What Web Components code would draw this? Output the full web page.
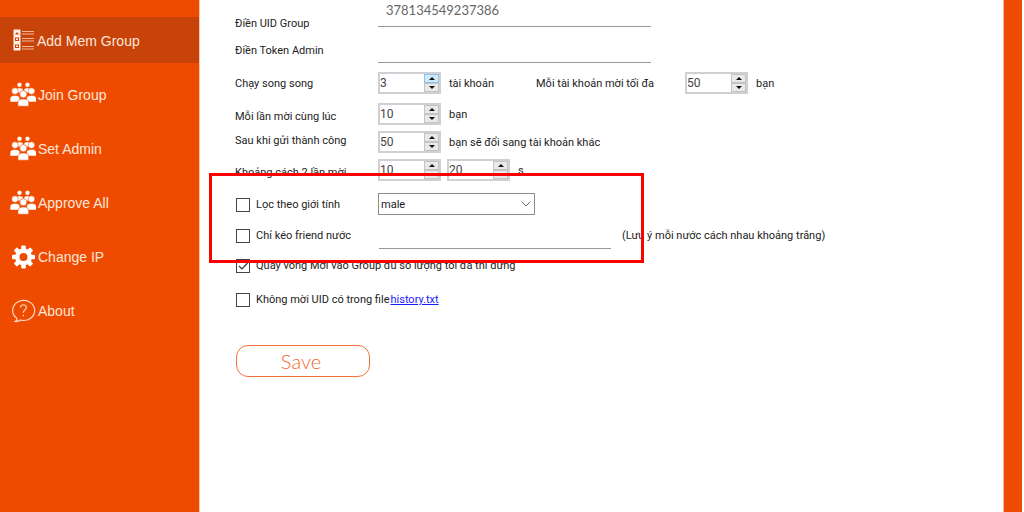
<!DOCTYPE html>
<html lang="vi">
<head>
<meta charset="utf-8">
<title>Add Mem Group</title>
<style>
  html, body { margin: 0; min-height: 100%; background: #fff; }
  body { font-family: Roboto, "Liberation Sans", sans-serif; font-size: 11px; line-height: 16px; color: #222; }
</style>
</head>
<body>
<app-shell>
  <side-nav slot="nav">
    <nav-item icon="list" active>Add Mem Group</nav-item>
    <nav-item icon="people">Join Group</nav-item>
    <nav-item icon="people">Set Admin</nav-item>
    <nav-item icon="people">Approve All</nav-item>
    <nav-item icon="gear">Change IP</nav-item>
    <nav-item icon="help">About</nav-item>
  </side-nav>
  <settings-form></settings-form>
</app-shell>

<template id="app-shell">
  <style>
    :host { display: flex; min-height: 100vh; padding-right: 2px; box-sizing: border-box; }
    aside { flex: 0 0 200px; background: #ee4b00; border-right: 1px solid #fbc4a8; box-sizing: border-box; }
    main { flex: 1; min-width: 0; }
    .edge { flex: 0 0 19px; background: #ee4b00; border-left: 1px solid #fbb391; box-sizing: border-box; }
  </style>
  <aside><slot name="nav"></slot></aside>
  <main><slot></slot></main>
  <div class="edge"></div>
</template>

<template id="side-nav">
  <style>
    :host { display: block; padding-top: 17px; }
    nav { display: flex; flex-direction: column; gap: 8px; }
  </style>
  <nav><slot></slot></nav>
</template>

<template id="nav-item">
  <style>
    :host { display: block; font: 14px/20px "Liberation Sans", Arial, sans-serif; }
    a { display: flex; align-items: center; gap: 2px; height: 46px; padding: 2px 0 0 10px; box-sizing: border-box; color: #ffe6da; text-decoration: none; }
    :host([active]) a { background: #c74309; gap: 1px; }
    svg { display: block; width: 26px; height: 26px; }
  </style>
  <a href="#"><svg viewBox="0 0 26 26" aria-hidden="true"></svg><slot></slot></a>
</template>

<template id="form-row">
  <style>
    :host { display: grid; grid-template-columns: 143px minmax(0, 1fr); align-items: center; min-height: 22px; white-space: nowrap; }
    :host([tall]) { min-height: 28px; }
    .fields { display: flex; align-items: center; }
    ::slotted([slot="label"]) { display: flex; align-items: center; }
    :host([low]) ::slotted([slot="label"]) { align-self: end; }
    :host([high]) ::slotted([slot="label"]) { align-self: start; }
  </style>
  <slot name="label"></slot>
  <div class="fields"><slot></slot></div>
</template>

<template id="spin-box">
  <style>
    :host { display: flex; flex: 0 0 63px; height: 22px; box-sizing: border-box; border: 2px solid #cfcfd4; background: #fff; }
    ::slotted(input) { flex: 1; min-width: 0; width: 0; padding: 0; border: 0; outline: 0; background: none; font: 12px/16px Roboto, sans-serif; color: #444; appearance: textfield; }
    .arrows { display: flex; flex-direction: column; width: 15px; }
    button { flex: 1; min-height: 0; display: flex; align-items: center; justify-content: center; padding: 0; border: 1px solid #c4c4c4; background: #e9e9e9; box-sizing: border-box; }
    :host([hot]) button:first-child { border-color: #8ec3ea; background: #cfe8fb; }
    svg { display: block; width: 6px; height: 3px; fill: #111; }
  </style>
  <slot></slot>
  <div class="arrows">
    <button type="button" aria-label="Tăng"><svg viewBox="0 0 6 3"><path d="M0 3L3 0L6 3z"/></svg></button>
    <button type="button" aria-label="Giảm"><svg viewBox="0 0 6 3"><path d="M0 0L3 3L6 0z"/></svg></button>
  </div>
</template>

<template id="drop-down">
  <style>
    :host { display: grid; width: 157px; height: 22px; align-items: center; }
    ::slotted(select), svg { grid-area: 1 / 1; }
    ::slotted(select) { width: 100%; height: 22px; padding: 1px 2px 0; border: 1px solid #8c8c8c; border-radius: 0; background: #fff; font: 11px/16px Roboto, sans-serif; color: #222; appearance: none; box-sizing: border-box; }
    svg { justify-self: end; margin-right: 4px; width: 10px; height: 6px; pointer-events: none; z-index: 1; fill: none; stroke: #666; }
  </style>
  <slot></slot>
  <svg viewBox="0 0 10 6"><path d="M.7 .7L5 5L9.300 .7"/></svg>
</template>

<template id="settings-form">
  <style>
    :host { display: block; position: relative; }
    form { display: flex; flex-direction: column; align-items: stretch; padding-left: 35px; }
    label, .unit, .note { padding-top: 2px; }
    input[type="text"] { box-sizing: border-box; width: 273px; height: 26px; padding: 0 8px; border: 0; border-bottom: 1px solid #999; background: none; outline: 0; color: #666; font: 13px/20px Lato, sans-serif; }
    #uid { height: 27px; padding: 0 8px 6px; align-self: flex-start; margin-bottom: 5px; }
    #country { width: 232px; height: 28px; margin-left: 1px; }
    .g5 { margin-top: 5px; }
    .g6 { margin-top: 6px; }
    .g9 { margin-top: 9px; }
    .g12 { margin-top: 12px; }
    .unit { padding-left: 8px; }
    .unit.wide { width: 95px; box-sizing: border-box; }
    .second { width: 149px; }
    .next { margin-left: 6px; }
    .note { padding-left: 11px; }
    .check { display: flex; align-items: center; gap: 6px; }
    input[type="checkbox"] { appearance: none; flex: none; width: 14px; height: 14px; margin: 0 0 0 1px; border: 1px solid #444; background: #fff; box-sizing: border-box; }
    input[type="checkbox"]:checked { background: no-repeat center / 10px 8px url("data:image/svg+xml,%3Csvg xmlns='http://www.w3.org/2000/svg' viewBox='0 0 10 8'%3E%3Cpath d='M1 4L4 7L9.500 1' fill='none' stroke='%23333' stroke-width='1.200'/%3E%3C/svg%3E"); }
    .line { display: flex; align-items: center; min-height: 22px; white-space: nowrap; }
    a { color: #1a1aff; margin-left: 1px; padding-top: 2px; }
    .save { align-self: flex-start; width: 134px; height: 32px; margin-top: 35px; margin-left: 1px; padding: 0 4px 0 0; border: 1px solid #f4713a; border-radius: 12px; background: #fff; color: #f4662a; font: 300 20px/28px Lato, sans-serif; }
    .ring { position: absolute; left: 9px; top: 173px; width: 435px; height: 90px; box-sizing: border-box; border: 3px solid #f00; pointer-events: none; }
  </style>
  <form>
    <form-row low><label slot="label" for="uid">Điền UID Group</label><input type="text" id="uid" value="378134549237386"></form-row>
    <form-row class="g5"><label slot="label" for="token">Điền Token Admin</label><input type="text" id="token"></form-row>
    <form-row class="g9"><label slot="label" for="threads">Chạy song song</label>
      <spin-box hot><input type="number" id="threads" value="3"></spin-box><span class="unit wide">tài khoản</span>
      <label class="second" for="limit">Mỗi tài khoản mời tối đa</label><spin-box><input type="number" id="limit" value="50"></spin-box><span class="unit">bạn</span></form-row>
    <form-row class="g9" low><label slot="label" for="batch">Mỗi lần mời cùng lúc</label>
      <spin-box><input type="number" id="batch" value="10"></spin-box><span class="unit">bạn</span></form-row>
    <form-row class="g6" high><label slot="label" for="after">Sau khi gửi thành công</label>
      <spin-box><input type="number" id="after" value="50"></spin-box><span class="unit">bạn sẽ đổi sang tài khoản khác</span></form-row>
    <form-row class="g6" low><label slot="label" for="from">Khoảng cách 2 lần mời</label>
      <spin-box><input type="number" id="from" value="10"></spin-box><spin-box class="next"><input type="number" aria-label="Đến" value="20"></spin-box><span class="unit">s</span></form-row>
    <form-row class="g12"><label slot="label" class="check"><input type="checkbox">Lọc theo giới tính</label>
      <drop-down><select aria-label="Giới tính"><option>male</option><option>female</option></select></drop-down></form-row>
    <form-row class="g6" tall><label slot="label" class="check"><input type="checkbox">Chỉ kéo friend nước</label>
      <input type="text" id="country" aria-label="Nước"><span class="note">(Lưu ý mỗi nước cách nhau khoảng trắng)</span></form-row>
    <div class="line g5"><label class="check"><input type="checkbox" checked>Quay vòng Mời vào Group đủ số lượng tối đa thì dừng</label></div>
    <div class="line g12"><label class="check"><input type="checkbox">Không mời UID có trong file</label><a href="#">history.txt</a></div>
    <button class="save" type="button">Save</button>
  </form>
  <div class="ring"></div>
</template>

<script>
  const person = (x, y, s) =>
    `<g transform="translate(${x} ${y}) scale(${s})"><circle cx="0" cy="-4" r="3"/><path d="M-4.500 6V3.500C-4.500 .8 -3 0 0 0S4.500 .8 4.500 3.500V6z"/></g>`;
  const teeth = [0, 45, 90, 135, 180, 225, 270, 315]
    .map(a => `<rect x="-2.300" y="-11.500" width="4.600" height="6" rx="1" transform="rotate(${a})"/>`).join('');
  const ICONS = {
    list: `<path fill="#fff0e8" fill-rule="evenodd" d="M3.500 1.500h7v21h-7zM5 6.500h4L7 4zM5 9.500h4v3.500H5zM5 16.500h4V20H5z"/><path fill="#fff0e8" d="M6 10.500h2v1.500H6zM6 17.500h2V19H6z"/><path stroke="#eeb89e" stroke-width="1.200" d="M12 3.500h12M12 6h12M12 10.500h12M12 13h12M12 18.500h12M12 21h12"/>`,
    people: `<g fill="#fff" stroke="#ee4b00" stroke-width=".5">${person(9.5, 6, .8)}${person(17.5, 6, .8)}${person(5, 13.5, 1.1)}${person(21.5, 13.5, 1.1)}${person(13.300, 17, 1.2)}</g>`,
    gear: `<g transform="translate(13.500 13)" fill="#fff">${teeth}<path fill-rule="evenodd" d="M0 -8.500A8.500 8.500 0 1 1 0 8.500A8.500 8.500 0 1 1 0 -8.500zM0 -4A4 4 0 1 0 0 4A4 4 0 1 0 0 -4z"/></g>`,
    help: `<g fill="none" stroke="#ffd9c6" stroke-width="1.200"><path d="M5 23.500C7 22.500 7.300 21.500 6.500 20A11 10 0 1 1 10.500 22C9 23.300 7 23.800 5 23.500z"/><path d="M10.500 9.500C10.500 5.800 16.500 5.800 16.300 9.500C16.200 12 13.400 11.800 13.400 14.800M13.400 16.800V18.300"/></g>`
  };

  function define(name, ready) {
    customElements.define(name, class extends HTMLElement {
      constructor() {
        super();
        this.attachShadow({ mode: 'open' }).append(document.getElementById(name).content.cloneNode(true));
      }
      connectedCallback() { if (ready) ready(this); }
    });
  }

  define('form-row');
  define('spin-box', el => {
    const [up, down] = el.shadowRoot.querySelectorAll('button');
    up.onclick = () => el.querySelector('input').stepUp();
    down.onclick = () => el.querySelector('input').stepDown();
  });
  define('drop-down');
  define('nav-item', el => {
    el.shadowRoot.querySelector('svg').innerHTML = ICONS[el.getAttribute('icon')];
    if (el.hasAttribute('active')) el.shadowRoot.querySelector('a').setAttribute('aria-current', 'page');
  });
  define('side-nav');
  define('settings-form');
  define('app-shell');
</script>
</body>
</html>
